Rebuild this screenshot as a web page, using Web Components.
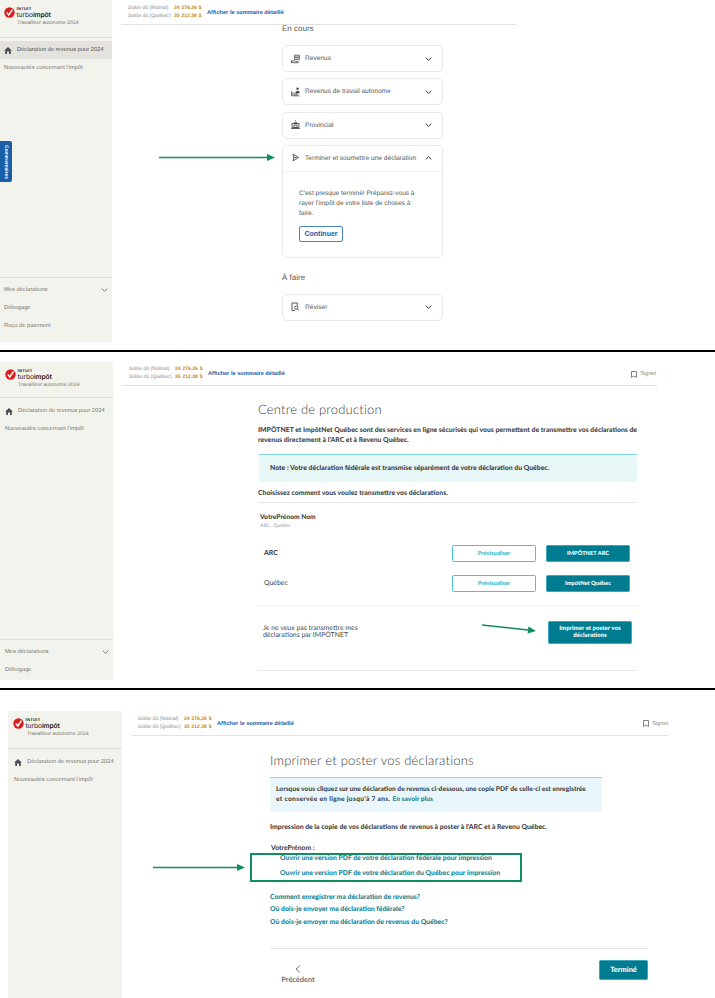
<!DOCTYPE html>
<html lang="fr"><head><meta charset="utf-8"><title>TurboImpôt</title>
<style>
html,body{margin:0;padding:0;background:#fff}
body{width:715px;height:998px;overflow:hidden;font-family:"Liberation Sans",Arial,sans-serif;text-rendering:geometricPrecision}
</style></head><body>
<script>
const def=(name,css,html)=>{
  customElements.define(name,class extends HTMLElement{
    constructor(){super();const r=this.attachShadow({mode:'open'});
      const fn=typeof html==='function'?html(this):html;
      r.innerHTML=`<style>${css}</style>${fn}`;}
  });
};
const HOME='<svg width="8" height="7" viewBox="0 0 8 7"><path d="M4 0 .2 3.4H1.2V7H3V4.6H5V7H6.8V3.4H7.8Z" fill="currentColor"/></svg>';
const CHEV=(up)=>`<svg width="7" height="4" viewBox="0 0 7 4"><path d="${up?'M.7 3.4 3.5.7 6.3 3.4':'M.7.6 3.5 3.3 6.3.6'}" fill="none" stroke="currentColor" stroke-width="1"/></svg>`;

def('tt-logo',`
:host{display:block;position:relative;height:var(--logo-h,37px);font-family:"Liberation Sans",Arial,sans-serif}
.row{display:flex;gap:1.5px;align-items:center;padding:var(--logo-pad,6px 0 0 4px)}
.w{display:flex;flex-direction:column;line-height:1}
.i{font:800 4.2px "Liberation Sans";letter-spacing:.25px;color:#1b1b1b;height:4.6px}
.t{font:400 6.7px "Inter","Liberation Sans";letter-spacing:-.1px;color:#1b1b1b;height:8px}
.t b{font-weight:600}
.s{font-size:5.2px;color:#77776f;margin:1.6px 0 0 var(--sub-x,17px);line-height:7px}`,
`<div class="row"><svg width="11" height="11" viewBox="0 0 11 11"><circle cx="5.5" cy="5.5" r="5.2" fill="#d9201f"/><path d="M2.8 5.6 4.8 7.9 8.4 2.6" fill="none" stroke="#fff" stroke-width="1.5"/></svg><div class="w"><span class="i">INTUIT</span><span class="t">turbo<b>impôt</b></span></div></div><div class="s">Travailleur autonome 2024</div>`);

def('tt-nav-item',`
:host{display:flex;align-items:center;height:18px;padding-left:var(--nav-x,4px);gap:5px;font-size:5.75px;color:#77776f;box-sizing:border-box}
:host([active]){background:#e3e2dc;color:#55554f}
:host([home]) svg{color:#4a4f52}
.c{margin-left:auto;margin-right:4px;display:flex}
:host(:not([home])) .h{display:none}
:host(:not([chevron])) .c{display:none}
svg{display:block}`,
`<span class="h">${HOME}</span><slot></slot><span class="c">${CHEV(false)}</span>`);

def('tt-sidebar',`
:host{display:flex;flex-direction:column;background:#f3f3ee;box-sizing:border-box}
.top{border-bottom:1px solid #dddcd6}
.nav{padding-top:var(--nav-top,3px)}
.foot{margin-top:auto;border-top:1px solid #dddcd6;padding-top:3px;padding-bottom:var(--foot-pb,0)}
:host(:not([footer])) .foot{display:none}`,
`<div class="top"><slot name="logo"></slot></div><div class="nav"><slot></slot></div><div class="foot"><slot name="foot"></slot></div>`);

def('tt-summary',`
:host{display:flex;align-items:center;box-sizing:border-box;border-bottom:1px solid #e2e2e2;height:var(--head-h,25px);padding-top:1px;padding-left:7px;padding-right:1px;font-family:"Liberation Sans",Arial,sans-serif}
.g{display:grid;grid-template-columns:46px auto;row-gap:2.4px;font-size:5.1px;line-height:5.4px;color:#8a8a8a;width:79px}
.v{font-weight:700;font-size:5px;color:#c98a22;word-spacing:.6px;white-space:nowrap}
a{font-weight:700;font-size:5.65px;color:#23609f;text-decoration:none;white-space:nowrap}
.sg{margin-left:auto;display:flex;align-items:center;gap:3px;font-size:5.6px;color:#8a8a8a}
:host(:not([signet])) .sg{display:none}`,
`<div class="g"><span>Solde dû (fédéral)</span><span class="v">24 276,26 $</span><span>Solde dû (Québec)</span><span class="v">35 212,38 $</span></div><a>Afficher le sommaire détaillé</a><span class="sg"><svg width="6" height="7" viewBox="0 0 6 7"><path d="M.5.5H5.5V6.5L3 5 .5 6.5Z" fill="none" stroke="#6f7478" stroke-width=".9"/></svg>Signet</span>`);

const ICONS={
 rev:'<path d="M3.5 1.2H8.5V3H3.5ZM3.5 3.8H8.5V5.5H3.5Z" fill="none" stroke="#4a4a4a" stroke-width=".8"/><path d="M.6 6.8H3L4.8 7.6H7.5L7 8.8H3.2L.6 8.4ZM.6 6.5V9.2" fill="none" stroke="#4a4a4a" stroke-width=".8"/>',
 self:'<circle cx="6.6" cy="1.8" r="1.2" fill="#4a4a4a"/><path d="M4.6 6.2V4.8C4.6 3.8 8.6 3.8 8.6 4.8V6.2Z" fill="#4a4a4a"/><path d="M.5 4.6V8.8M.5 6H3L4.2 6.8H6.5L6 8H2.5L.5 7.8M1 8.8H8.5" fill="none" stroke="#4a4a4a" stroke-width=".8"/>',
 prov:'<path d="M4.5.3V1.4M2.6 3.4C2.6 2 6.4 2 6.4 3.4Z" fill="none" stroke="#4a4a4a" stroke-width=".8"/><path d="M1 3.6H8V7.6H1ZM.2 8.5H8.8M3 5H6V7.5H3Z" fill="none" stroke="#4a4a4a" stroke-width=".9"/>',
 send:'<path d="M2 1.2 7.6 4.5 2 7.8 2.8 4.5Z" fill="none" stroke="#4a4a4a" stroke-width=".9"/><path d="M2.8 4.5H5.6" stroke="#4a4a4a" stroke-width=".8"/>',
 rev2:'<path d="M6.3 1H1V8.6H4" fill="none" stroke="#4a4a4a" stroke-width=".9"/><path d="M6.3 1V3.5" stroke="#4a4a4a" stroke-width=".9"/><circle cx="5.2" cy="5.6" r="1.6" fill="none" stroke="#4a4a4a" stroke-width=".9"/><path d="M6.3 6.8 8 8.6" stroke="#4a4a4a" stroke-width=".9"/>'
};
def('tt-card',`
:host{display:block;border:1px solid #e8eaec;border-radius:5px;box-sizing:border-box;background:#fff;font-family:"Liberation Sans",Arial,sans-serif}
.h{display:flex;align-items:center;height:25px;padding:0 10px 0 8px;gap:5px;font-size:6.6px;color:#55595c}
.h svg{display:block}
.t{flex:1;white-space:nowrap}
.ch{color:#33373a;display:flex;margin-left:2px}
:host([open]) .h{border-bottom:1px solid #f1f2f3}
.b{padding:17.6px 22px 15px 16px}
:host(:not([open])) .b{display:none}`,
el=>`<div class="h"><svg width="9" height="10" viewBox="0 0 9 10">${ICONS[el.getAttribute('icon')]}</svg><span class="t">${el.getAttribute('label')}</span><span class="ch">${CHEV(el.hasAttribute('open'))}</span></div><div class="b"><slot></slot></div>`);

def('tt-btn',`
:host{display:flex;align-items:center;justify-content:center;box-sizing:border-box;text-align:center;border-radius:1.5px;font:900 5.7px/7.4px Lato,"Liberation Sans",sans-serif}
:host([kind=solid]){background:#007c91;color:#fff;border:1px solid #3fa6c0}
:host([kind=ghost]){background:#fff;color:#35b4c0;border:1px solid #45c6d2}`,
`<slot></slot>`);

def('tt-arrow',`
:host{display:block;position:absolute;pointer-events:none}
svg{display:block;overflow:visible}`,
el=>{const w=+el.getAttribute('w'),h=+el.getAttribute('h')||7,dy=+el.getAttribute('dy')||0;
 const y0=h/2-dy/2,y1=h/2+dy/2;
 const ang=Math.atan2(dy,w-8);const c=Math.cos(ang),s=Math.sin(ang);
 const bx=w-8,by=y1-8*Math.tan(ang);
 return `<svg width="${w}" height="${h}"><path d="M0 ${y0}L${bx} ${by}" stroke="#0e8f60" stroke-width="1.6"/><path d="M${w} ${y1}L${bx-3.6*s} ${by+3.6*c}L${bx+3.6*s} ${by-3.6*c}Z" fill="#0e8f60"/></svg>`});

def('tt-screen',`
:host{display:grid;box-sizing:border-box;position:relative;overflow:hidden;grid-template-columns:var(--side-w) var(--main-w);column-gap:var(--gap);padding:var(--pad);height:var(--h);color:#3a3a3a}`,
`<slot></slot>`);
def('tt-bar',`:host{display:block;height:2px;background:#000}`,``);
def('tt-main',`
:host{display:block;min-width:0}
.c{margin-left:var(--col-x);width:var(--col-w)}`,
`<slot name="head"></slot><div class="c"><slot></slot></div>`);

def('tt-progress',`
:host{display:block;font-family:"Liberation Sans",Arial,sans-serif}
h2{font:400 8px/8px "Liberation Sans",Arial;color:#5a5a5a;margin:0}
.cards{display:flex;flex-direction:column;gap:6.3px;margin-top:12px}
.b{margin-top:16px}
.n{display:block;margin-top:12px}
p{font-size:6.55px;line-height:9.8px;color:#55595c;margin:0}
button{display:block;margin-top:7px;width:44px;height:16px;border:1.5px solid #4a82bd;border-radius:2px;background:#fff;color:#1f5a9c;font:700 7px "Liberation Sans";padding:0}`,
`<h2 class="a">En cours</h2><div class="cards"><tt-card icon="rev" label="Revenus"></tt-card><tt-card icon="self" label="Revenus de travail autonome"></tt-card><tt-card icon="prov" label="Provincial"></tt-card><tt-card icon="send" label="Terminer et soumettre une déclaration" open><p>C'est presque terminé! Préparez-vous à rayer l'impôt de votre liste de choses à faire.</p><button>Continuer</button></tt-card></div><h2 class="b">À faire</h2><tt-card class="n" icon="rev2" label="Réviser"></tt-card>`);

const BASE=`:host{display:block;font-family:Lato,"Liberation Sans",sans-serif;color:#3f3f3f}
h1{font:300 13px/16px Lato,"Liberation Sans";letter-spacing:.2px;color:#3a3a3a;margin:0}
p{margin:0}.m{font-weight:900;font-size:6.85px;line-height:9.6px;color:#454545}`;
def('tt-production',BASE+`
h1{margin-top:15px}
.intro{margin-top:9px}
.note{margin-top:8.6px;border-top:1px solid #7fd6da;background:#e7f7f8;height:28px;box-sizing:border-box;padding-left:11px;display:flex;align-items:center;font-weight:900;font-size:6.85px;margin-left:1px}
.ch{margin-top:7px;border-bottom:1px solid #e8e8e8;height:13px}
.who{padding:10px 0 0 2px;height:37px;box-sizing:border-box;font-weight:900;font-size:6.65px;line-height:9px}
.who small{display:block;font-weight:400;font-size:5px;color:#9a9a9a;line-height:8px}
.r{display:flex;align-items:center;height:17px;padding-left:6px;font-size:6.9px}
.r b{font-weight:900}.r tt-btn{height:17px;width:84px}
.r span{flex:1}.r tt-btn+tt-btn{margin-left:10px;margin-right:7px}
.q{margin-top:13px}.arc{margin-top:5px}
.hr{border-top:1px solid #eeeeee;margin-top:13px}
.no{display:flex;align-items:center;justify-content:space-between;padding:15px 5px 0 5px;height:38px;box-sizing:border-box;font-size:6.9px;line-height:7.6px;color:#4a4a4a}
.no tt-btn{height:23px;width:84px;font-size:6.1px}
.end{border-top:1px solid #e9e9e9;margin-top:26px}`,
`<h1>Centre de production</h1><p class="m intro">IMPÔTNET et ImpôtNet Québec sont des services en ligne sécurisés qui vous permettent de transmettre vos déclarations de revenus directement à l'ARC et à Revenu Québec.</p><div class="note">Note : Votre déclaration fédérale est transmise séparément de votre déclaration du Québec.</div><div class="m ch">Choisissez comment vous voulez transmettre vos déclarations.</div><div class="who">VotrePrénom Nom<small>ARC , Québec</small></div><div class="r arc"><span><b>ARC</b></span><tt-btn kind="ghost">Prévisualiser</tt-btn><tt-btn kind="solid">IMPÔTNET ARC</tt-btn></div><div class="r q"><span>Québec</span><tt-btn kind="ghost">Prévisualiser</tt-btn><tt-btn kind="solid">ImpôtNet Québec</tt-btn></div><div class="hr"></div><div class="no"><div>Je ne veux pas transmettre mes<br>déclarations par IMPÔTNET</div><tt-btn kind="solid">Imprimer et poster vos<br>déclarations</tt-btn></div><div class="end"></div>`);
def('tt-print',BASE+`
h1{margin-top:16px}
.info{margin-top:9px;width:332px;height:35px;box-sizing:border-box;border-top:1px solid #8fd8de;background:#e9f7fd;padding:7.3px 4px 0 6px;font-weight:900;font-size:6.65px;line-height:9.4px;color:#454545}
.line{display:flex;gap:2px;white-space:nowrap}
.line span{letter-spacing:.3px}
a{color:#168494;font-weight:900;text-decoration:none;display:block}
.imp{margin-top:11px}
.who{margin:11.7px 0 0 1px;font-weight:700;font-size:6.8px;line-height:9px;color:#333}
.l{font-size:6.85px;line-height:9px}
.l1{margin:1px 0 0 10px}.l2{margin:6px 0 0 10px}
.l3{margin-top:15px}.l4{margin-top:3px}.l5{margin-top:3.7px}
.rule{border-top:1px solid #e6e6e6;margin-top:20.8px}
.nav{display:flex;justify-content:space-between;padding-top:11px}
.prev{margin-left:11px;text-align:center;font-weight:700;font-size:7.4px;color:#707070;line-height:9px;width:34px}
.prev svg{display:block;margin:5px auto 2px}
.nav tt-btn{width:49px;height:20px;font-size:7.4px}`,
`<h1>Imprimer et poster vos déclarations</h1><div class="info"><div>Lorsque vous cliquez sur une déclaration de revenus ci-dessous, une copie PDF de celle-ci est enregistrée</div><div class="line"><span>et conservée en ligne jusqu'à 7 ans.</span><a>En savoir plus</a></div></div><p class="m imp">Impression de la copie de vos déclarations de revenus à poster à l'ARC et à Revenu Québec.</p><div class="who">VotrePrénom :</div><a class="l l1">Ouvrir une version PDF de votre déclaration fédérale pour impression</a><a class="l l2">Ouvrir une version PDF de votre déclaration du Québec pour impression</a><a class="l l3">Comment enregistrer ma déclaration de revenus?</a><a class="l l4">Où dois-je envoyer ma déclaration fédérale?</a><a class="l l5">Où dois-je envoyer ma déclaration de revenus du Québec?</a><div class="rule"></div><div class="nav"><div class="prev"><svg width="6" height="8" viewBox="0 0 6 8"><path d="M5 .5 1 4 5 7.5" fill="none" stroke="#6a6a6a" stroke-width=".9"/></svg>Précédent</div><tt-btn kind="solid">Terminé</tt-btn></div>`);

def('tt-tab',`
:host{display:flex;position:absolute;left:0;top:141px;width:11.5px;height:41px;background:#1b5ea8;border-radius:0 2px 2px 0;align-items:center;justify-content:center;color:#fff;font:700 4.9px "Liberation Sans"}
span{writing-mode:vertical-rl;white-space:nowrap}`,
`<span><slot></slot></span>`);
def('tt-frame',`:host{display:block;position:absolute;left:250px;top:163px;width:272px;height:29px;box-sizing:border-box;border:2px solid #0e8f60;pointer-events:none}`,``);

const logo=(p,h,sub)=>`<tt-logo slot="logo" style="--logo-pad:${p};--logo-h:${h}px;--sub-x:${sub}px"></tt-logo>`;
document.body.insertAdjacentHTML('beforeend',`
<tt-screen style="--side-w:112px;--main-w:396px;--gap:9px;--pad:0 0 8px 0;--h:350px">
 <tt-sidebar footer style="--foot-pb:7px">
  ${logo('6px 0 0 4px',37,17)}
  <tt-nav-item active home>Déclaration de revenus pour 2024</tt-nav-item>
  <tt-nav-item>Nouveautés concernant l'impôt</tt-nav-item>
  <tt-nav-item slot="foot" chevron>Mes déclarations</tt-nav-item>
  <tt-nav-item slot="foot">Débogage</tt-nav-item>
  <tt-nav-item slot="foot">Reçu de paiement</tt-nav-item>
 </tt-sidebar>
 <tt-main style="--col-x:161px;--col-w:161px">
  <tt-summary slot="head"></tt-summary>
  <tt-progress></tt-progress>
 </tt-main>
 <tt-tab>Commentaires</tt-tab>
 <tt-arrow style="left:159px;top:154px" w="116" h="7"></tt-arrow>
</tt-screen>
<tt-bar></tt-bar>
<tt-screen style="--side-w:113px;--main-w:535px;--gap:9px;--pad:10px 0 8px 0;--h:336px">
 <tt-sidebar footer style="--nav-top:4px;--foot-pb:1px">
  ${logo('6px 0 0 5px',35,18)}
  <tt-nav-item home style="--nav-x:5px">Déclaration de revenus pour 2024</tt-nav-item>
  <tt-nav-item style="--nav-x:5px">Nouveautés concernant l'impôt</tt-nav-item>
  <tt-nav-item slot="foot" chevron style="--nav-x:5px">Mes déclarations</tt-nav-item>
  <tt-nav-item slot="foot" style="--nav-x:5px">Débogage</tt-nav-item>
 </tt-sidebar>
 <tt-main style="--col-x:136px;--col-w:379px">
  <tt-summary slot="head" signet style="--head-h:24px"></tt-summary>
  <tt-production></tt-production>
 </tt-main>
 <tt-arrow style="left:482px;top:271px" w="54" h="10" dy="6"></tt-arrow>
</tt-screen>
<tt-bar></tt-bar>
<tt-screen style="--side-w:114px;--main-w:538px;--gap:9px;--pad:21px 0 0 8px;--h:308px">
 <tt-sidebar style="--nav-top:4px">
  ${logo('6px 0 0 5px',37,19)}
  <tt-nav-item home style="--nav-x:6px">Déclaration de revenus pour 2024</tt-nav-item>
  <tt-nav-item style="--nav-x:6px">Nouveautés concernant l'impôt</tt-nav-item>
 </tt-sidebar>
 <tt-main style="--col-x:139px;--col-w:378px">
  <tt-summary slot="head" signet></tt-summary>
  <tt-print></tt-print>
 </tt-main>
 <tt-arrow style="left:153px;top:174px" w="92" h="7"></tt-arrow>
 <tt-frame></tt-frame>
</tt-screen>`);
</script>
</body></html>
